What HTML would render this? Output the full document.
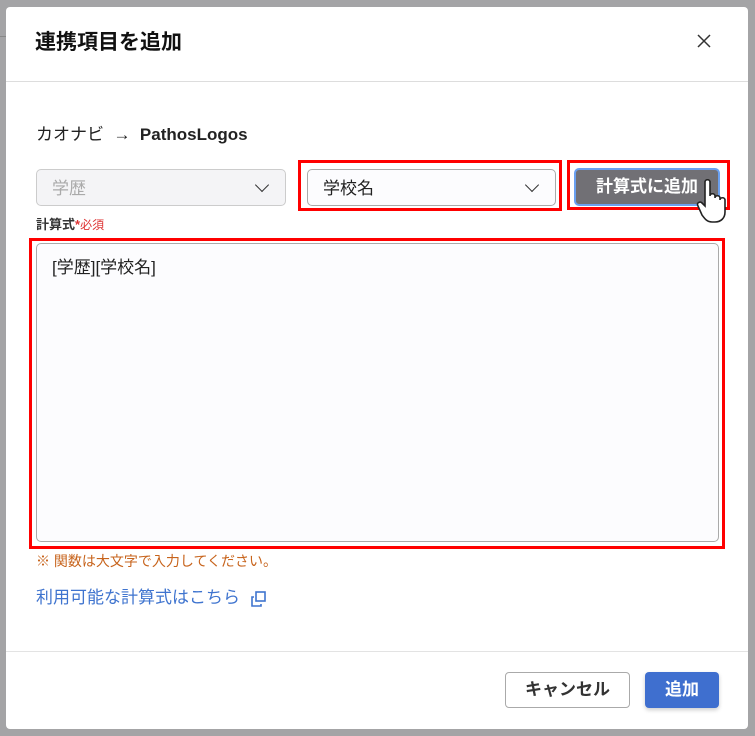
<!DOCTYPE html><html><head><meta charset="utf-8"><style>
*{box-sizing:border-box;margin:0;padding:0}
body{width:755px;height:736px;background:#a4a4a6;position:relative;overflow:hidden;font-family:"Liberation Sans","Noto Sans CJK JP",sans-serif;color:#222}
.a{position:absolute}
.modal{left:6px;top:7px;width:742px;height:722px;background:#fff;border-radius:4px}
.sel{height:37px;border:1px solid #aaa;border-radius:5px;font-size:17px;line-height:37px;padding:0 15px;background:#fcfcfe}
.chev{position:absolute;right:18px;top:10px;width:10px;height:10px;border-right:1.5px solid #333;border-bottom:1.5px solid #333;transform:rotate(45deg)}
.red{border:3px solid #f00}
</style></head><body>
<div class="a" style="left:0;top:36px;width:6px;height:1px;background:#888"></div>
<div class="a modal"></div>
<div class="a" style="left:35px;top:29px;font-size:21px;line-height:28px;font-weight:bold;color:#111">連携項目を追加</div>
<svg class="a" style="left:697px;top:34px" width="14" height="14"><path d="M1 1L13 13M13 1L1 13" stroke="#333" stroke-width="1.5"/></svg>
<div class="a" style="left:6px;top:81px;width:742px;height:1px;background:#ddd"></div>
<div class="a" style="left:36px;top:123px;font-size:17px;line-height:24px">カオナビ &nbsp;→ &nbsp;<b>PathosLogos</b></div>
<div class="a sel" style="left:36px;top:169px;width:250px;color:#aaa;background:#f4f4f6;border-color:#ccc">学歴<span class="chev"></span></div>
<div class="a red" style="left:298px;top:160px;width:264px;height:51px"></div>
<div class="a sel" style="left:307px;top:169px;width:249px;color:#222">学校名<span class="chev"></span></div>
<div class="a red" style="left:567px;top:160px;width:163px;height:50px"></div>
<div class="a" style="left:574px;top:168px;width:146px;height:38px;background:#717075;border:2px solid #6aa0f0;border-radius:5px;color:#fff;font-weight:bold;font-size:17px;text-align:center;line-height:34px">計算式に追加</div>
<svg class="a" style="left:696px;top:178px" width="34" height="48" viewBox="0 0 34 48"><path d="M9 4c0-3 5-3 5 0v14c0-3 5-3 5 0v2c0-3 5-3 5 0v2c0-3 5-3 5 0v12c0 6-4 10-10 10h-3c-5 0-7-3-10-7L2 28c-2-3 2-5 4-3l3 3z" fill="#fff" stroke="#222" stroke-width="1.6"/></svg>
<div class="a" style="left:36px;top:216px;font-size:13px;line-height:18px;font-weight:bold;color:#333">計算式<span style="color:#d33">*</span><span style="color:#d33;font-weight:normal;font-size:12px">必須</span></div>
<div class="a red" style="left:29px;top:238px;width:696px;height:311px"></div>
<div class="a" style="left:36px;top:243px;width:683px;height:299px;border:1px solid #aaa;border-radius:5px;background:#fcfcfe;font-size:17px;line-height:22px;padding:13px 15px">[学歴][学校名]</div>
<div class="a" style="left:36px;top:551px;font-size:14px;line-height:20px;color:#c7631b">※ 関数は大文字で入力してください。</div>
<div class="a" style="left:36px;top:586px;font-size:17px;line-height:24px;color:#3f74cf">利用可能な計算式はこちら</div>
<svg class="a" style="left:250px;top:590px" width="17" height="17"><rect x="6" y="2" width="9" height="9" fill="none" stroke="#3f74cf" stroke-width="1.6"/><path d="M4 7H2v9h9v-2" fill="none" stroke="#3f74cf" stroke-width="1.6"/></svg>
<div class="a" style="left:6px;top:651px;width:742px;height:1px;background:#e3e3e3"></div>
<div class="a" style="left:505px;top:672px;width:125px;height:36px;border:1px solid #aaa;border-radius:4px;text-align:center;line-height:34px;font-weight:bold;font-size:17px;color:#333">キャンセル</div>
<div class="a" style="left:645px;top:672px;width:74px;height:36px;background:#3f6fcf;border-radius:4px;text-align:center;line-height:36px;font-weight:bold;font-size:17px;color:#fff;box-shadow:0 2px 4px rgba(0,0,0,.2)">追加</div>
</body></html>
